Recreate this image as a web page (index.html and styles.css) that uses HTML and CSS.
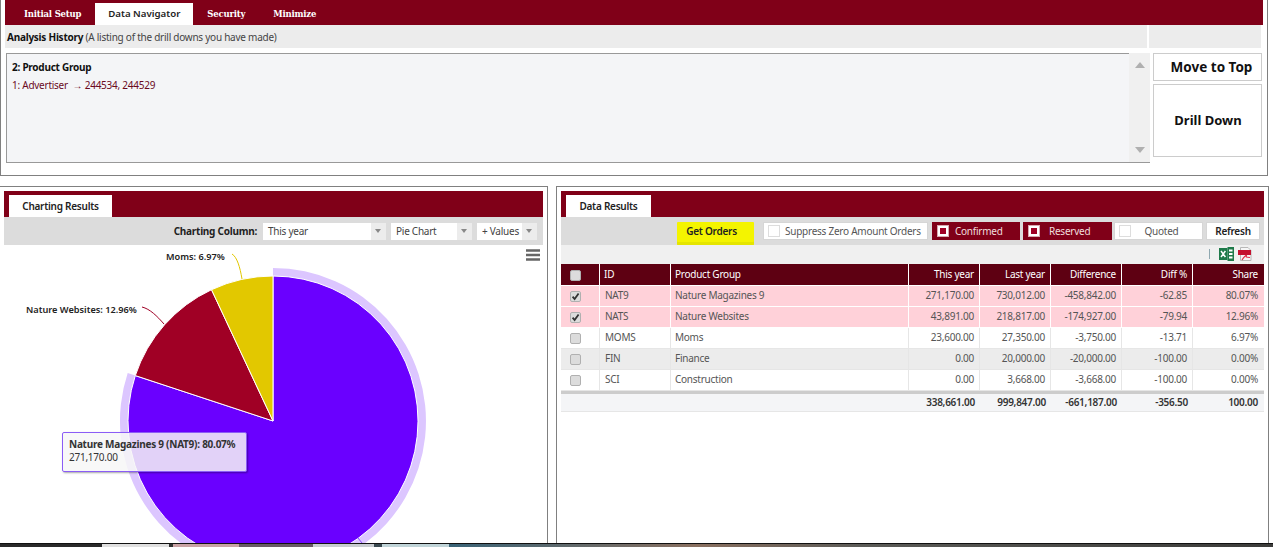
FILE: index.html
```html
<!DOCTYPE html>
<html lang="en">
<head>
<meta charset="utf-8">
<title>Data Navigator</title>
<link rel="stylesheet" href="styles.css">
</head>
<body>
<svg class="defs" width="0" height="0">
  <symbol id="box" viewBox="0 0 11 11"><rect x=".5" y=".5" width="10" height="10" rx="1.5" fill="#dcdcdc" stroke="#b0b0b0"/></symbol>
  <symbol id="tick" viewBox="0 0 11 11"><rect x=".5" y=".5" width="10" height="10" rx="1.5" fill="#dcdcdc" stroke="#b0b0b0"/><path d="M2.6 5.6 4.6 8 8.6 2.4" fill="none" stroke="#333" stroke-width="1.8"/></symbol>
</svg>
<section class="top-panel">
  <nav class="top-tabs">
    <span class="top-tab">Initial Setup</span>
    <span class="top-tab active">Data Navigator</span>
    <span class="top-tab">Security</span>
    <span class="top-tab">Minimize</span>
  </nav>
  <div class="history-head">
    <div class="history-title"><b>Analysis History</b> (A listing of the drill downs you have made)</div>
    <div class="history-side"></div>
  </div>
  <div class="history-body">
    <div class="history-box">
      <div class="history-list">
        <div class="history-current">2: Product Group</div>
        <div class="history-past">1: Advertiser &nbsp;→ 244534, 244529</div>
      </div>
      <div class="scrollbar"><i class="tri up"></i><i class="tri down"></i></div>
    </div>
    <div class="history-actions">
      <button class="btn move">Move to Top</button>
      <button class="btn drill">Drill Down</button>
    </div>
  </div>
</section>

<main class="bottom">
  <section class="panel left">
    <div class="bar"><span class="bar-tab chart-tab">Charting Results</span></div>
    <div class="chart-tools">
      <b class="chart-label">Charting Column:</b>
      <span class="select s1"><span class="select-text">This year</span><i class="select-arrow"></i></span>
      <span class="select s2"><span class="select-text">Pie Chart</span><i class="select-arrow"></i></span>
      <span class="select s3"><span class="select-text">+ Values</span><i class="select-arrow"></i></span>
    </div>
    <div class="chart">
      <svg class="pie" width="539" height="298" viewBox="0 0 539 298">
        <path fill="#dcc6ff" d="M269 23A153 153 0 1 1 123.7 128L131.3 130.6A145 145 0 1 0 269 31Z"/>
        <path fill="#6a00ff" stroke="#fff" stroke-width="1" d="M269 176L269 31A145 145 0 1 1 131.3 130.6Z"/>
        <path fill="#a00025" stroke="#fff" stroke-width="1" d="M269 176L131.3 130.6A145 145 0 0 1 207.5 44.7Z"/>
        <path fill="#e2c800" stroke="#fff" stroke-width="1" d="M269 176L207.5 44.7A145 145 0 0 1 269 31Z"/>
        <path fill="none" stroke="#e2c800" d="M228 9C233 12 236 22 238 34"/>
        <path fill="none" stroke="#a00025" d="M138 62C146 64 153 71 160 79"/>
        <path fill="none" stroke="#8a4dff" d="M354 293L358 298"/>
        <text class="pie-label" x="162" y="15">Moms: 6.97%</text>
        <text class="pie-label" x="22" y="68">Nature Websites: 12.96%</text>
        <path fill="none" stroke="#666" stroke-width="2.4" d="M522 5.500H536M522 10H536M522 14.500H536"/>
      </svg>
      <div class="tooltip"><b>Nature Magazines 9 (NAT9): 80.07%</b><br>271,170.00</div>
    </div>
  </section>

  <section class="panel right">
    <div class="bar"><span class="bar-tab data-tab">Data Results</span></div>
    <div class="data-tools">
      <button class="get-orders">Get Orders</button>
      <span class="toggle suppress"><i class="toggle-box"></i>Suppress Zero Amount Orders</span>
      <span class="toggle on confirmed"><i class="toggle-box"></i>Confirmed</span>
      <span class="toggle on reserved"><i class="toggle-box"></i>Reserved</span>
      <span class="toggle quoted"><i class="toggle-box"></i><span class="toggle-center">Quoted</span></span>
      <button class="refresh">Refresh</button>
    </div>
    <div class="export-row">
      <i class="export-sep"></i>
      <svg class="export-icon" width="15" height="14" viewBox="0 0 15 14">
        <rect x="0" y="1" width="8.500" height="12" fill="#1f7a4a"/>
        <path d="M2 4 6.400 10M6.400 4 2 10" stroke="#fff" stroke-width="1.500"/>
        <rect x="8.500" y="0" width="6.500" height="14" fill="#1f7a4a"/>
        <path d="M10 2.500h3.500v2H10zM10 6h3.500v2H10zM10 9.500h3.500v2H10z" fill="#fff"/>
      </svg>
      <svg class="export-icon pdf" width="14" height="14" viewBox="0 0 14 14">
        <path d="M2.500 .5H10L13 3.500V13.500H2.500Z" fill="#f6f6f6" stroke="#b8b8b8"/>
        <rect x="0" y="3" width="13" height="5" fill="#c4122f"/>
        <path d="M4 13C6 10 8 8 8.500 8.500 9 9.500 6 10 12 10.500" fill="none" stroke="#e0304a" stroke-width="1.200"/>
      </svg>
    </div>
    <table class="grid">
      <colgroup>
        <col class="c-check"><col class="c-id"><col class="c-name"><col class="c-num"><col class="c-num"><col class="c-num"><col class="c-num"><col class="c-share">
      </colgroup>
      <thead>
        <tr><th class="mid"><svg class="cb"><use href="#box"/></svg></th><th>ID</th><th>Product Group</th><th class="n">This year</th><th class="n">Last year</th><th class="n">Difference</th><th class="n">Diff %</th><th class="n">Share</th></tr>
      </thead>
      <tbody>
        <tr class="sel"><td class="mid"><svg class="cb"><use href="#tick"/></svg></td><td class="id">NAT9</td><td>Nature Magazines 9</td><td class="n">271,170.00</td><td class="n">730,012.00</td><td class="n">-458,842.00</td><td class="n">-62.85</td><td class="n">80.07%</td></tr>
        <tr class="sel"><td class="mid"><svg class="cb"><use href="#tick"/></svg></td><td class="id">NATS</td><td>Nature Websites</td><td class="n">43,891.00</td><td class="n">218,817.00</td><td class="n">-174,927.00</td><td class="n">-79.94</td><td class="n">12.96%</td></tr>
        <tr><td class="mid"><svg class="cb"><use href="#box"/></svg></td><td class="id">MOMS</td><td>Moms</td><td class="n">23,600.00</td><td class="n">27,350.00</td><td class="n">-3,750.00</td><td class="n">-13.71</td><td class="n">6.97%</td></tr>
        <tr class="alt"><td class="mid"><svg class="cb"><use href="#box"/></svg></td><td class="id">FIN</td><td>Finance</td><td class="n">0.00</td><td class="n">20,000.00</td><td class="n">-20,000.00</td><td class="n">-100.00</td><td class="n">0.00%</td></tr>
        <tr><td class="mid"><svg class="cb"><use href="#box"/></svg></td><td class="id">SCI</td><td>Construction</td><td class="n">0.00</td><td class="n">3,668.00</td><td class="n">-3,668.00</td><td class="n">-100.00</td><td class="n">0.00%</td></tr>
      </tbody>
      <tfoot>
        <tr><td></td><td></td><td></td><td class="n">338,661.00</td><td class="n">999,847.00</td><td class="n">-661,187.00</td><td class="n">-356.50</td><td class="n">100.00</td></tr>
      </tfoot>
    </table>
  </section>
</main>

<footer class="taskbar">
  <i class="tb t1"></i><i class="tb t2"></i><i class="tb t3"></i><i class="tb t4"></i><i class="tb t5"></i><i class="tb t6"></i><i class="tb t7"></i><i class="tb t8"></i><i class="tb t9"></i>
</footer>
</body>
</html>
```
FILE: styles.css
```css
* { box-sizing: border-box; }
html, body { margin: 0; padding: 0; }
body {
  width: 1273px;
  height: 547px;
  overflow: hidden;
  background: #fff;
  font: 10px "Noto Sans", Tahoma, sans-serif;
  letter-spacing: -.25px;
  color: #333;
  display: flex;
  flex-direction: column;
}
.defs { display: block; height: 0; }

/* top panel */
.top-panel {
  width: 1268px;
  height: 176px;
  flex: none;
  border: 1px solid #808080;
  border-top: 0;
  padding: 0 4px;
}
.top-tabs {
  display: flex;
  height: 25px;
  padding: 3px 0 0 5px;
  background: #800018;
}
.top-tab {
  padding: 0 14px;
  color: #fff;
  font: bold 8.5px/23px "DejaVu Serif", serif;
  letter-spacing: -.2px;
}
.top-tab.active {
  background: #fff;
  color: #222;
  padding: 0 13px;
  letter-spacing: 0;
  font: 600 9.7px/22px "Noto Sans", sans-serif;
}
.history-head {
  display: flex;
  height: 23px;
  margin-right: 2px;
  gap: 2px;
}
.history-title {
  flex: 1;
  background: #ececec;
  padding-left: 2px;
  line-height: 25px;
  color: #444;
}
.history-title b { color: #111; }
.history-side { width: 112px; background: #ececec; }
.history-body { display: flex; margin-top: 5px; }
.history-box {
  width: 1144px;
  height: 110px;
  margin-left: 1px;
  display: flex;
  border: 1px solid #999;
  border-right: 0;
  background: #f4f5f7;
}
.history-list { flex: 1; padding: 6px 5px; }
.history-current { font-weight: bold; color: #111; line-height: 14px; }
.history-past { margin-top: 4px; color: #6b0a1e; line-height: 14px; }
.scrollbar {
  width: 21px;
  margin-top: -1px;
  background: #f0f0f0;
  display: flex;
  flex-direction: column;
  justify-content: space-between;
  align-items: center;
  padding: 9px 0 9px;
}
.tri { width: 0; height: 0; border-left: 5px solid transparent; border-right: 5px solid transparent; }
.tri.up { border-bottom: 6px solid #b0b0b0; }
.tri.down { border-top: 6px solid #b0b0b0; }
.history-actions {
  width: 109px;
  margin-left: 3px;
  display: flex;
  flex-direction: column;
  gap: 3px;
}
.btn {
  background: #fff;
  border: 1.5px solid #ccc;
  font: bold 13.500px "Noto Sans", sans-serif;
  color: #111;
  padding: 0;
}
.btn.move { height: 28px; padding-left: 8px; }
.btn.drill { height: 73px; font-size: 13px; padding: 0 0 2px 1px; }

/* lower panels */
.bottom {
  display: flex;
  flex: none;
  height: 357px;
  margin-top: 10px;
  gap: 8px;
}
.panel {
  border-top: 1px solid #808080;
  border-right: 1px solid #808080;
  padding: 4px 4px 0;
  overflow: hidden;
}
.panel.left { width: 548px; }
.panel.right { width: 713px; border-left: 1px solid #808080; }
.bar {
  height: 26px;
  padding: 4px 0 0 5px;
  background: #800018;
  display: flex;
}
.bar-tab {
  background: #fff;
  color: #222;
  font-weight: 600;
  line-height: 22px;
  text-align: center;
}
.chart-tab { width: 103px; }
.data-tab { width: 85px; }

.chart-tools {
  height: 28px;
  background: #dcdcdc;
  display: flex;
  align-items: flex-start;
  justify-content: flex-end;
  padding: 6px 6px 0 0;
  gap: 5px;
}
.chart-label { color: #222; line-height: 16px; margin-right: 1px; }
.select {
  display: flex;
  height: 17px;
  background: #fff;
}
.select-text { flex: 1; padding-left: 5px; line-height: 17px; color: #444; }
.select-arrow {
  width: 15px;
  background: #ececec;
  position: relative;
}
.select-arrow::after {
  content: "";
  position: absolute;
  left: 4px;
  top: 6px;
  border-left: 3.500px solid transparent;
  border-right: 3.500px solid transparent;
  border-top: 4px solid #888;
}
.s1 { width: 123px; }
.s2 { width: 81px; }
.s3 { width: 60px; }

.chart { position: relative; height: 298px; }
.pie { display: block; }
.pie-label { font: 600 9.2px "Noto Sans", sans-serif; fill: #222; letter-spacing: 0; }
.tooltip {
  position: absolute;
  left: 58px;
  top: 187px;
  width: 185px;
  height: 40px;
  padding: 5px 6px;
  line-height: 13px;
  border: 1px solid #8b5cf6;
  border-radius: 2px;
  background: rgba(247, 247, 247, .85);
  box-shadow: 1px 1px 2px rgba(0, 0, 0, .35);
  color: #333;
  white-space: nowrap;
}

.data-tools {
  height: 28px;
  background: #dcdcdc;
  display: flex;
  align-items: flex-start;
  padding: 5px 4px 0 116px;
}
.get-orders {
  width: 77px;
  height: 23px;
  border: 0;
  padding: 0 8px 6px 0;
  margin-right: 9px;
  background: #f4f400;
  font: 600 10px "Noto Sans", sans-serif;
  letter-spacing: -.25px;
  color: #222;
  border-radius: 1px;
  box-shadow: inset 0 -3px 0 #e5e500;
}
.toggle {
  display: flex;
  align-items: center;
  height: 18px;
  background: #fff;
  border: 1px solid #d6d6d6;
  color: #555;
  padding-left: 4px;
  white-space: nowrap;
}
.toggle-box {
  width: 12px;
  height: 12px;
  flex: none;
  margin-right: 5px;
  border: 1px solid #ddd;
  background: #fff;
}
.toggle.on {
  background: #800018;
  border-color: #800018;
  color: #f0dede;
}
.toggle.on .toggle-box { border: 3px solid #fff; background: #a00025; outline: 1px solid #d8a8b0; outline-offset: -1px; }
.suppress { width: 165px; margin-right: 4px; }
.confirmed { width: 88px; margin-right: 3px; }
.reserved { width: 89px; margin-right: 2px; }
.reserved .toggle-box { margin-right: 9px; }
.confirmed .toggle-box { margin-right: 6px; }
.quoted { width: 89px; margin-right: 3px; }
.toggle-center { flex: 1; text-align: center; padding-right: 15px; }
.refresh {
  width: 54px;
  height: 18px;
  padding: 0;
  background: #fff;
  border: 1px solid #d6d6d6;
  font: 600 10px "Noto Sans", sans-serif;
  letter-spacing: -.25px;
  color: #222;
}
.export-row {
  height: 19px;
  background: #f0f0f0;
  display: flex;
  align-items: center;
  justify-content: flex-end;
  padding: 0 12px 1px 0;
}
.export-sep { width: 1px; height: 10px; background: #8fa8b0; margin-right: 9px; }
.export-icon { display: block; }
.export-icon.pdf { margin-left: 4px; }

.grid {
  width: 703px;
  table-layout: fixed;
  border-collapse: separate;
  border-spacing: 0;
}
.c-check { width: 39px; }
.c-id { width: 71px; }
.c-name { width: 238px; }
.c-num { width: 71px; }
.c-share { width: 71px; }
.grid th, .grid td {
  padding: 0 4px 1px;
  font-weight: normal;
  text-align: left;
  border-right: 1px solid #e6e6e6;
  border-bottom: 1px solid #e6e6e6;
  white-space: nowrap;
  overflow: hidden;
}
.grid tbody td { padding-bottom: 2px; }
.grid th {
  height: 22px;
  background: #5e0012;
  color: #fff;
  border-color: #fff;
}
.grid td { height: 21px; color: #555; }
.grid td:last-child, .grid th:last-child { border-right: 0; }
.grid .n { text-align: right; padding-right: 5px; }
.grid .n:last-child { padding-right: 6px; }
.grid .mid { text-align: center; padding: 0 9px 1px 0; }
.grid .id { padding-left: 5px; }
.cb { width: 11px; height: 11px; display: inline-block; vertical-align: middle; }
.sel td { background: #ffd1d9; border-color: #fff; }
.alt td { background: #ececec; }
.grid tfoot td {
  height: 21px;
  background: #f4f5f7;
  border-top: 3px solid #ccc;
  border-right: 0;
  font-weight: 600;
  color: #333;
}

/* desktop taskbar edge */
.taskbar {
  display: flex;
  flex: none;
  height: 4px;
  border-top: 1px solid #111;
  background: #222;
}
.tb { display: block; height: 3px; }
.t1 { width: 102px; background: #2a2a2a; }
.t2 { width: 67px; background: #e0e0e0; }
.t3 { width: 4px; background: #333; }
.t4 { width: 66px; background: #c9a2a4; }
.t5 { width: 74px; background: #6a5a66; }
.t6 { width: 61px; background: #c8ccd0; }
.t7 { width: 8px; background: #3a4a50; }
.t8 { width: 67px; background: #c0d4d8; }
.t9 { flex: 1; background: linear-gradient(90deg, #3a6478 0, #8a7060 30%, #5c5c58 50%, #3c3c3a 100%); }
```
